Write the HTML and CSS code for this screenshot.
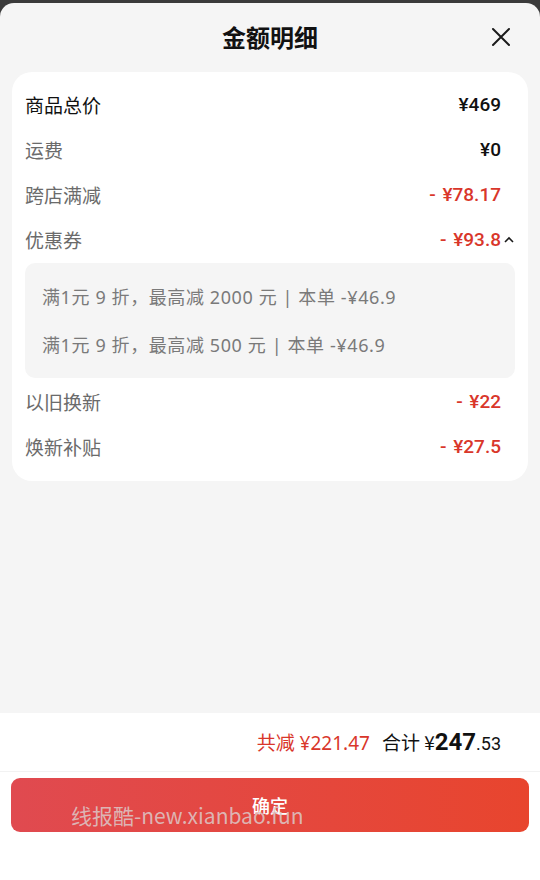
FILE: index.html
```html
<!DOCTYPE html>
<html lang="zh">
<head>
<meta charset="utf-8">
<link rel="stylesheet" href="styles.css">
</head>
<body>
<div class="sheet">
  <div class="header">
    <div class="title">金额明细</div>
    <svg class="close" width="20" height="20" viewBox="0 0 20 20"><path d="M2 2L18 18M18 2L2 18" stroke="#1a1a1a" stroke-width="2" stroke-linecap="round"/></svg>
  </div>
  <div class="card">
    <div class="row"><span class="label dark">商品总价</span><span class="val">¥469</span></div>
    <div class="row"><span class="label">运费</span><span class="val">¥0</span></div>
    <div class="row"><span class="label">跨店满减</span><span class="val red">- ¥78.17</span></div>
    <div class="row"><span class="label">优惠券</span><span class="val red with-icon">- ¥93.8<svg class="chev" width="12" height="10" viewBox="0 0 12 10"><path d="M2 7L6 3L10 7" fill="none" stroke="#1a1a1a" stroke-width="1.6"/></svg></span></div>
    <div class="coupons">
      <div class="coupon">满1元 9 折，最高减 2000 元 | 本单 -¥46.9</div>
      <div class="coupon">满1元 9 折，最高减 500 元 | 本单 -¥46.9</div>
    </div>
    <div class="row"><span class="label">以旧换新</span><span class="val red">- ¥22</span></div>
    <div class="row"><span class="label">焕新补贴</span><span class="val red">- ¥27.5</span></div>
  </div>
  <div class="spacer"></div>
  <div class="footer">
    <div class="summary">
      <span class="saved">共减 ¥221.47</span>
      <span class="total">合计 ¥<b>247</b><small>.53</small></span>
    </div>
    <div class="btn-wrap">
      <button class="btn">确定<span class="watermark">线报酷-new.xianbao.fun</span></button>
    </div>
  </div>
</div>
</body>
</html>
```
FILE: styles.css
```css
* { box-sizing: border-box; }
html, body { margin: 0; padding: 0; }
body {
  width: 540px;
  height: 880px;
  overflow: hidden;
  background: #3b3b3b;
  font-family: "Noto Sans CJK SC", "Noto Sans", sans-serif;
}
.sheet {
  margin-top: 3px;
  height: 877px;
  background: #f5f5f5;
  border-radius: 14px 14px 0 0;
  display: flex;
  flex-direction: column;
}
.header {
  position: relative;
  height: 69px;
  display: flex;
  align-items: center;
  justify-content: center;
}
.title {
  font-size: 24px;
  font-weight: 700;
  color: #111;
  margin-top: -2px;
}
.close {
  position: absolute;
  right: 29px;
  top: 24px;
}
.card {
  margin: 0 12px;
  background: #fff;
  border-radius: 20px;
  padding: 10px 0 12px;
}
.row {
  height: 45px;
  display: flex;
  align-items: center;
  justify-content: space-between;
  padding: 0 27px 0 13px;
}
.label {
  font-size: 19px;
  color: #6b6b6b;
}
.label.dark { color: #111; }
.val {
  font-family: "Roboto", "Noto Sans", sans-serif;
  font-size: 19px;
  font-weight: 500;
  color: #111;
  word-spacing: 2px;
}
.val.red { color: #d9362a; }
.with-icon {
  display: flex;
  align-items: center;
  margin-right: -14px;
}
.chev { margin-left: 2px; }
.coupons {
  margin: 1px 13px 1px 13px;
  background: #f5f5f5;
  border-radius: 10px;
  padding: 9px 17px 10px;
}
.coupon {
  height: 48px;
  display: flex;
  align-items: center;
  font-family: "Noto Sans", "Noto Sans CJK SC", sans-serif;
  font-size: 18px;
  letter-spacing: 0.6px;
  color: #7a7a7a;
}
.spacer { flex: 1; }
.footer {
  height: 167px;
  background: #fff;
}
.summary {
  height: 59px;
  border-bottom: 1px solid #f2f2f2;
  display: flex;
  align-items: center;
  justify-content: flex-end;
  padding-right: 39px;
  gap: 12px;
}
.saved {
  color: #d9362a;
  font-family: "Noto Sans", "Noto Sans CJK SC", sans-serif;
  font-size: 19px;
}
.total {
  color: #111;
  font-size: 19px;
}
.total b {
  font-family: "Roboto", "Noto Sans", sans-serif;
  font-size: 24px;
  font-weight: 700;
}
.total small {
  font-family: "Roboto", "Noto Sans", sans-serif;
  font-size: 18px;
}
.btn-wrap {
  padding: 6px 11px;
}
.btn {
  position: relative;
  width: 100%;
  height: 54px;
  border: 0;
  border-radius: 9px;
  background: linear-gradient(90deg, #e04a50, #e8452e);
  color: #fff;
  font-family: "Noto Sans CJK SC", sans-serif;
  font-size: 18px;
  font-weight: 500;
  padding: 0;
}
.watermark {
  position: absolute;
  left: 60px;
  top: 22px;
  font-size: 21px;
  font-weight: 400;
  color: rgba(220, 200, 200, 0.85);
  white-space: nowrap;
}
```
